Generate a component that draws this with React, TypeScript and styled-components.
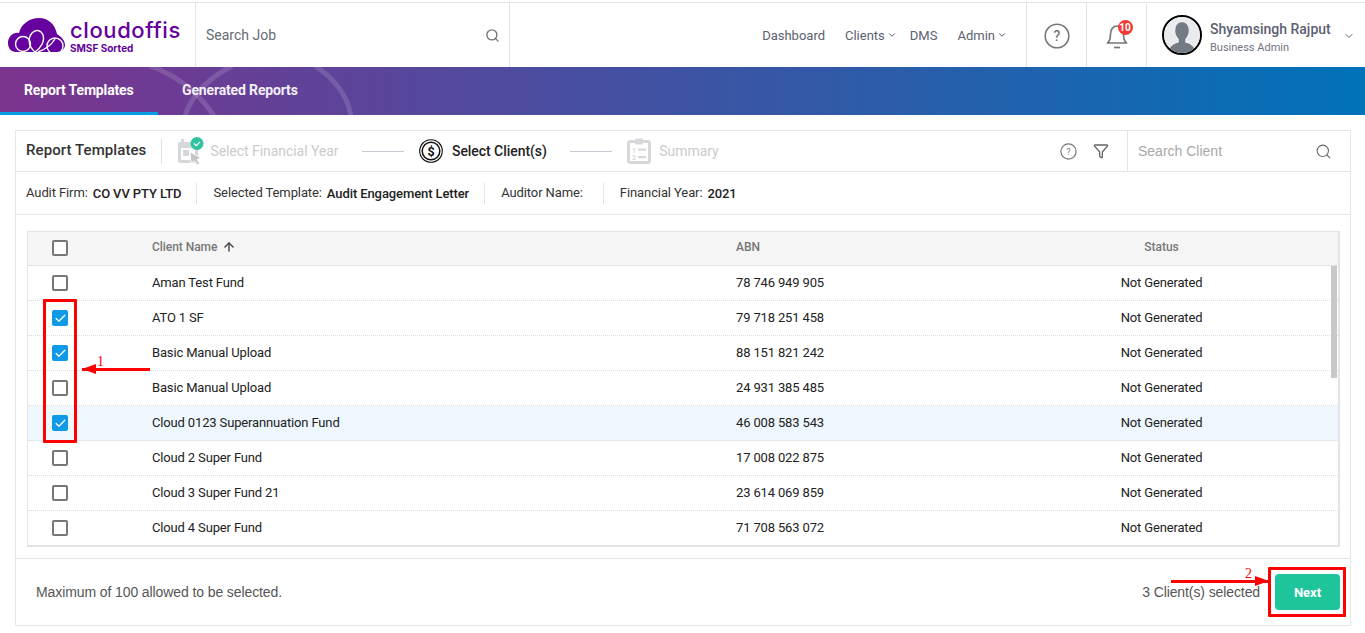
import React from 'react'
import styled, { createGlobalStyle } from 'styled-components'
import { ChevronDown, Search, ArrowUp, Check, Filter } from 'lucide-react'

const clients = [
  { name: 'Aman Test Fund', abn: '78 746 949 905', checked: false },
  { name: 'ATO 1 SF', abn: '79 718 251 458', checked: true },
  { name: 'Basic Manual Upload', abn: '88 151 821 242', checked: true },
  { name: 'Basic Manual Upload', abn: '24 931 385 485', checked: false },
  { name: 'Cloud 0123 Superannuation Fund', abn: '46 008 583 543', checked: true, hover: true },
  { name: 'Cloud 2 Super Fund', abn: '17 008 022 875', checked: false },
  { name: 'Cloud 3 Super Fund 21', abn: '23 614 069 859', checked: false },
  { name: 'Cloud 4 Super Fund', abn: '71 708 563 072', checked: false },
]

const GlobalStyle = createGlobalStyle`
  html, body {
    margin: 0;
    padding: 0;
    background: #fff;
    font-family: Roboto, "Liberation Sans", sans-serif;
  }
  * { box-sizing: border-box; }
`

const App: React.FC = () => {
  return (
    <Page>
      <GlobalStyle />
      <Header>
        <LogoBox>
          <svg width="58" height="36" viewBox="0 0 58 36">
            <path d="M8 35 C3 35 0 31 0 26 C0 20 5 15 11 16 C13 7 22 1 31 1 C40 1 47 7 49 17 C54 20 57 24 57 28 C57 32 53 35 49 35 Z" fill="#66009e" />
            <g fill="none" stroke="#fff" strokeWidth="1.4">
              <circle cx="15" cy="27" r="7.5" />
              <path d="M27 35 C21 30 19 22 24 16 C28 12 33 13 35 18 C37 24 33 31 27 35" />
              <path d="M30 35 C36 33 42 30 47 22" />
              <circle cx="47" cy="29" r="8" />
            </g>
          </svg>
          <LogoText>
            <LogoName>cloudoffis</LogoName>
            <LogoSub>SMSF Sorted</LogoSub>
          </LogoText>
        </LogoBox>
        <JobSearch>
          <span>Search Job</span>
          <Search size={15} color="#777" strokeWidth={2.2} />
        </JobSearch>
        <Nav>
          <NavItem>Dashboard</NavItem>
          <NavItem $tight>Clients<ChevronDown size={10} strokeWidth={2.4} /></NavItem>
          <NavItem>DMS</NavItem>
          <NavItem>Admin<ChevronDown size={10} strokeWidth={2.4} /></NavItem>
        </Nav>
        <IconCell>
          <HelpIcon width="26" height="26" viewBox="0 0 26 26">
            <circle cx="13" cy="13" r="11.8" fill="none" stroke="#777" strokeWidth="1.6" />
            <text x="13" y="18" textAnchor="middle" fontSize="14" fontWeight="500" fontFamily="Roboto" fill="#777">?</text>
          </HelpIcon>
        </IconCell>
        <IconCell>
          <BellWrap>
            <svg width="24" height="26" viewBox="0 0 24 26">
              <path d="M2.5 20 C4.5 18.5 5.5 16 5.5 11 C5.5 6 8.5 3 12 3 C15.5 3 18.5 6 18.5 11 C18.5 16 19.5 18.5 21.5 20 Z" fill="none" stroke="#777" strokeWidth="1.7" strokeLinejoin="round" />
              <path d="M9 24.5 H15" stroke="#777" strokeWidth="1.7" />
            </svg>
            <Badge>10</Badge>
          </BellWrap>
        </IconCell>
        <UserCell>
          <Avatar>
            <svg width="36" height="36" viewBox="0 0 34 34">
              <circle cx="17" cy="17" r="17" fill="#e9ebee" />
              <path d="M4 34 C5 27 10 25 14 24 L14 21 C11 18 10 14 11 10 C12 6 15 5 17 5 C19 5 22 6 23 10 C24 14 23 18 20 21 L20 24 C24 25 29 27 30 34 Z" fill="#737a82" />
            </svg>
          </Avatar>
          <UserText>
            <UserName>Shyamsingh Rajput</UserName>
            <UserRole>Business Admin</UserRole>
          </UserText>
          <ChevronDown size={12} color="#666" />
        </UserCell>
      </Header>

      <Banner>
        <BannerArt width="400" height="48" viewBox="0 67 400 48">
          <g fill="none" stroke="#fff" strokeOpacity="0.14" strokeWidth="5">
            <path d="M150 66 Q190 80 214 116" />
            <path d="M232 66 Q195 85 185 116" />
            <path d="M315 66 Q345 85 351 116" />
          </g>
        </BannerArt>
        <Tab $active>Report Templates</Tab>
        <Tab>Generated Reports</Tab>
      </Banner>

      <Card>
        <StepBar>
          <CardTitle>Report Templates</CardTitle>
          <StepDivider />
          <Step $muted $gap={5}>
            <svg width="28" height="28" viewBox="0 0 28 28">
              <rect x="1" y="5" width="20" height="21" rx="2" fill="#d5d7da" />
              <rect x="4" y="2" width="3" height="5" fill="#d5d7da" />
              <rect x="15" y="2" width="3" height="5" fill="#d5d7da" />
              <rect x="4" y="11" width="14" height="12" fill="#fff" />
              <rect x="6" y="13" width="6" height="6" fill="#d5d7da" />
              <path d="M13 15 L24 21 L20 22.5 L23 27 L20 28 L17.5 24 L14 26 Z" fill="#c4c6ca" stroke="#fff" strokeWidth="0.8" />
              <circle cx="20" cy="6.5" r="6.5" fill="#2ec4a0" />
              <path d="M17 6.5 L19.3 8.7 L23 4.8" fill="none" stroke="#fff" strokeWidth="1.2" />
            </svg>
            <span>Select Financial Year</span>
          </Step>
          <StepLine />
          <Step $gap={9}>
            <svg width="24" height="24" viewBox="0 0 24 24">
              <circle cx="12" cy="12" r="11.3" fill="none" stroke="#111" strokeWidth="1.1" />
              <circle cx="12" cy="12" r="8.8" fill="none" stroke="#111" strokeWidth="1.5" />
              <text x="12" y="16.5" textAnchor="middle" fontSize="12.5" fontWeight="700" fontFamily="Roboto" fill="#111">$</text>
            </svg>
            <span>Select Client(s)</span>
          </Step>
          <StepLine />
          <Step $muted $gap={8}>
            <svg width="24" height="26" viewBox="0 0 24 26">
              <rect x="1.5" y="3.5" width="21" height="21" rx="2" fill="#fff" stroke="#d5d7da" strokeWidth="3" />
              <rect x="8" y="0.5" width="8" height="6" rx="1" fill="#d5d7da" />
              <text x="7" y="14.5" textAnchor="middle" fontSize="7" fontWeight="700" fontFamily="Roboto" fill="#d5d7da">1</text>
              <text x="7" y="22" textAnchor="middle" fontSize="7" fontWeight="700" fontFamily="Roboto" fill="#d5d7da">2</text>
              <rect x="11" y="10.5" width="8" height="2.2" fill="#d5d7da" />
              <rect x="11" y="18" width="8" height="2.2" fill="#d5d7da" />
            </svg>
            <span>Summary</span>
          </Step>
          <BarTools>
            <svg width="17" height="17" viewBox="0 0 17 17">
              <circle cx="8.5" cy="8.5" r="7.6" fill="none" stroke="#777" strokeWidth="1.2" />
              <text x="8.5" y="11.5" textAnchor="middle" fontSize="8.5" fontFamily="Roboto" fill="#777">?</text>
            </svg>
            <Filter size={16} color="#666" strokeWidth={2} />
          </BarTools>
          <ClientSearch>
            <span>Search Client</span>
            <Search size={17} color="#666" strokeWidth={1.5} />
          </ClientSearch>
        </StepBar>

        <InfoBar>
          <InfoItem>
            <InfoLabel>Audit Firm:</InfoLabel>
            <InfoValue>CO VV PTY LTD</InfoValue>
          </InfoItem>
          <InfoItem>
            <InfoLabel>Selected Template:</InfoLabel>
            <InfoValue>Audit Engagement Letter</InfoValue>
          </InfoItem>
          <InfoItem>
            <InfoLabel>Auditor Name:</InfoLabel>
            <InfoValue />
          </InfoItem>
          <InfoItem>
            <InfoLabel>Financial Year:</InfoLabel>
            <InfoValue>2021</InfoValue>
          </InfoItem>
        </InfoBar>

        <TableArea>
          <Table>
            <HeadRow>
              <CheckCell><CheckBox /></CheckCell>
              <HeadName>Client Name <ArrowUp size={14} color="#444" strokeWidth={2.4} /></HeadName>
              <Cell>ABN</Cell>
              <StatusCell>Status</StatusCell>
            </HeadRow>
            <Body>
              {clients.map((c) => (
                <Row key={c.abn} $hover={c.hover}>
                  <CheckCell>
                    <CheckBox $checked={c.checked}>
                      {c.checked && <Check size={13} color="#fff" strokeWidth={2.4} />}
                    </CheckBox>
                  </CheckCell>
                  <Cell>{c.name}</Cell>
                  <Cell>{c.abn}</Cell>
                  <StatusCell>Not Generated</StatusCell>
                </Row>
              ))}
              <ScrollThumb />
            </Body>
          </Table>
        </TableArea>

        <Footer>
          <span>Maximum of 100 allowed to be selected.</span>
          <FooterRight>
            <span>3 Client(s) selected</span>
            <NextButton>Next</NextButton>
          </FooterRight>
        </Footer>
      </Card>

      <RedBox $left={43} $top={299} $width={34} $height={144} />
      <RedBox $left={1268} $top={567} $width={78} $height={50} />
      <Arrow $left={82} $top={362} $width={68} $dir="left" />
      <Arrow $left={1171} $top={574} $width={98} $dir="right" />
      <RedNumber $left={97} $top={354}>1</RedNumber>
      <RedNumber $left={1245} $top={566}>2</RedNumber>
    </Page>
  )
}

const Page = styled.div`
  position: relative;
  width: 1365px;
  height: 633px;
  padding-top: 2px;
  overflow: hidden;
  background: #fff;
`

const Header = styled.div`
  height: 65px;
  display: flex;
  border-top: 1px solid #e4e4e4;
  background: #fff;
`

const LogoBox = styled.div`
  width: 196px;
  display: flex;
  align-items: center;
  gap: 4px;
  padding: 0 0 1px 8px;
  border-right: 1px solid #e2e2e2;
`

const LogoText = styled.div`
  display: flex;
  flex-direction: column;
  padding-top: 3px;
`

const LogoName = styled.div`
  font-family: Inter, sans-serif;
  font-weight: 500;
  font-size: 22px;
  line-height: 24px;
  letter-spacing: 0.6px;
  color: #66009e;
`

const LogoSub = styled.div`
  font-family: Inter, sans-serif;
  font-weight: 700;
  font-size: 10px;
  line-height: 12px;
  color: #66009e;
`

const JobSearch = styled.div`
  width: 314px;
  display: flex;
  align-items: center;
  justify-content: space-between;
  padding: 0 9px 0 10px;
  border-right: 1px solid #e2e2e2;
  font-size: 14px;
  color: #666b75;
`

const Nav = styled.div`
  flex: 1;
  display: flex;
  align-items: center;
  justify-content: flex-end;
  gap: 20px;
  padding-right: 19px;
  font-size: 13px;
  color: #5c6070;
`

const NavItem = styled.div<{ $tight?: boolean }>`
  display: flex;
  align-items: center;
  gap: 2px;
  margin-right: ${(p) => (p.$tight ? '-7px' : '0')};
`

const IconCell = styled.div`
  width: 60px;
  display: flex;
  align-items: center;
  justify-content: center;
  border-left: 1px solid #e2e2e2;
`

const HelpIcon = styled.svg`
  position: relative;
  top: 1px;
`

const BellWrap = styled.div`
  position: relative;
  display: flex;
  top: 1px;
`

const Badge = styled.div`
  position: absolute;
  top: -3px;
  right: -4px;
  width: 15px;
  height: 15px;
  border-radius: 50%;
  background: #ee3b34;
  color: #fff;
  font-size: 10px;
  font-weight: 700;
  line-height: 15px;
  text-align: center;
`

const UserCell = styled.div`
  width: 219px;
  margin-top: 1px;
  display: flex;
  align-items: center;
  padding-left: 15px;
  border-left: 1px solid #e2e2e2;
  & > svg {
    margin-left: 12px;
  }
`

const Avatar = styled.div`
  width: 40px;
  height: 40px;
  border: 2px solid #000;
  border-radius: 50%;
  overflow: hidden;
  margin: 0 8px 2px 0;
`

const UserText = styled.div`
  display: flex;
  flex-direction: column;
  gap: 3px;
  padding-top: 4px;
`

const UserName = styled.div`
  font-size: 14px;
  font-weight: 500;
  line-height: 17px;
  color: #5c6070;
`

const UserRole = styled.div`
  font-size: 11px;
  line-height: 13px;
  color: #6f7480;
`

const Banner = styled.div`
  position: relative;
  height: 48px;
  display: flex;
  background: linear-gradient(90deg, #7c348f 0%, #0072b8 100%);
`

const BannerArt = styled.svg`
  position: absolute;
  left: 0;
  top: 0;
`

const Tab = styled.div<{ $active?: boolean }>`
  position: relative;
  width: ${(p) => (p.$active ? '158px' : 'auto')};
  padding: 0 24px;
  display: flex;
  align-items: center;
  font-size: 14px;
  font-weight: 700;
  letter-spacing: -0.15px;
  color: #fff;
  opacity: ${(p) => (p.$active ? 1 : 0.92)};
  border-bottom: 3px solid ${(p) => (p.$active ? '#00a0e3' : 'transparent')};
`

const Card = styled.div`
  margin: 15px 14px 0 15px;
  height: 496px;
  border: 1px solid #e6e6e6;
  display: flex;
  flex-direction: column;
`

const StepBar = styled.div`
  height: 41px;
  display: flex;
  align-items: center;
  padding-left: 10px;
  border-bottom: 1px solid #e4e4e4;
`

const CardTitle = styled.div`
  font-size: 15px;
  font-weight: 500;
  letter-spacing: 0.08px;
  color: #333;
  position: relative;
  top: -1px;
`

const StepDivider = styled.div`
  width: 1px;
  height: 25px;
  background: #e2e2e2;
  margin: 0 15px;
`

const Step = styled.div<{ $muted?: boolean; $gap: number }>`
  display: flex;
  align-items: center;
  gap: ${(p) => p.$gap}px;
  font-size: 14px;
  letter-spacing: -0.05px;
  font-weight: ${(p) => (p.$muted ? 400 : 500)};
  color: ${(p) => (p.$muted ? '#c9cbce' : '#222')};
`

const StepLine = styled.div`
  width: 42px;
  height: 1px;
  background: #c8cad4;
  margin: 0 15px 0 23.5px;
`

const BarTools = styled.div`
  margin-left: auto;
  display: flex;
  align-items: center;
  gap: 16px;
  padding-right: 18px;
`

const ClientSearch = styled.div`
  width: 223px;
  height: 100%;
  display: flex;
  align-items: center;
  justify-content: space-between;
  padding: 0 18px 0 10px;
  border-left: 1px solid #e4e4e4;
  font-family: "Liberation Sans", Arial, sans-serif;
  font-size: 14px;
  color: #a8a8a8;
`

const InfoBar = styled.div`
  height: 43px;
  display: flex;
  align-items: center;
  padding-left: 10px;
  border-bottom: 1px solid #e8e8e8;
`

const InfoItem = styled.div`
  display: flex;
  align-items: center;
  gap: 5px;
  height: 21px;
  padding-right: 15px;
  margin-right: 16px;
  border-right: 1px solid #e2e2e2;
  &:last-child {
    border-right: 0;
  }
`

const InfoLabel = styled.span`
  font-size: 13px;
  letter-spacing: -0.1px;
  color: #333;
  position: relative;
  top: -1px;
`

const InfoValue = styled.span`
  font-size: 13px;
  font-weight: 500;
  letter-spacing: -0.1px;
  color: #222;
`

const TableArea = styled.div`
  flex: 1;
  padding: 16px 10px 11px 11px;
  border-bottom: 1px solid #e4e4e4;
`

const Table = styled.div`
  height: 316px;
  border: 1px solid #e3e3e8;
  border-width: 1px 2px 2px 1px;
  overflow: hidden;
`

const columns = '124px 584px 249px 1fr'

const HeadRow = styled.div`
  height: 34px;
  padding-bottom: 1px;
  display: grid;
  grid-template-columns: ${columns};
  align-items: center;
  background: #f5f5f5;
  border-bottom: 1px solid #e2e2e2;
  font-size: 12px;
  font-weight: 500;
  letter-spacing: -0.05px;
  color: #777;
`

const Cell = styled.span`
  padding-bottom: 2px;
`

const HeadName = styled(Cell)`
  display: flex;
  align-items: center;
  gap: 5px;
`

const Body = styled.div`
  position: relative;
`

const Row = styled.div<{ $hover?: boolean }>`
  height: 35px;
  display: grid;
  grid-template-columns: ${columns};
  align-items: center;
  font-size: 13px;
  letter-spacing: -0.15px;
  color: #222;
  background: ${(p) => (p.$hover ? '#eef7fd' : '#fff')};
  border-bottom: 1px dotted #ddd;
`

const CheckCell = styled.div`
  padding-left: 24px;
  display: flex;
`

const StatusCell = styled(Cell)`
  text-align: center;
`

const CheckBox = styled.div<{ $checked?: boolean }>`
  width: 16px;
  height: 16px;
  border-radius: 2px;
  display: flex;
  align-items: center;
  justify-content: center;
  border: ${(p) => (p.$checked ? '0' : '2px solid #777')};
  background: ${(p) => (p.$checked ? '#0f9ae8' : '#fff')};
`

const ScrollThumb = styled.div`
  position: absolute;
  right: 1px;
  top: 0;
  width: 6px;
  height: 112px;
  background: #c8c8c8;
`

const Footer = styled.div`
  flex: 1;
  display: flex;
  align-items: center;
  justify-content: space-between;
  padding: 0 10px 0 20px;
  font-family: "Liberation Sans", Arial, sans-serif;
  font-size: 14px;
  letter-spacing: -0.1px;
  color: #555;
`

const FooterRight = styled.div`
  display: flex;
  align-items: center;
  gap: 15px;
`

const NextButton = styled.button`
  width: 65px;
  height: 36px;
  border: 0;
  border-radius: 4px;
  background: #1fc59a;
  color: #fff;
  font-family: Roboto, sans-serif;
  font-size: 13px;
  font-weight: 700;
`

type Place = { $left: number; $top: number }

const RedBox = styled.div<Place & { $width: number; $height: number }>`
  position: absolute;
  left: ${(p) => p.$left}px;
  top: ${(p) => p.$top}px;
  width: ${(p) => p.$width}px;
  height: ${(p) => p.$height}px;
  border: 3px solid #f00;
  border-radius: 1px;
`

const Arrow = styled.div<Place & { $width: number; $dir: 'left' | 'right' }>`
  position: absolute;
  left: ${(p) => p.$left}px;
  top: ${(p) => p.$top}px;
  width: ${(p) => p.$width}px;
  height: 14px;
  &::before {
    content: '';
    position: absolute;
    top: 6px;
    left: 0;
    right: 0;
    height: 2.5px;
    background: #f00;
  }
  &::after {
    content: '';
    position: absolute;
    top: 2px;
    ${(p) => (p.$dir === 'left' ? 'left: 0;' : 'right: 0;')}
    border-top: 5px solid transparent;
    border-bottom: 5px solid transparent;
    ${(p) => (p.$dir === 'left' ? 'border-right: 14px solid #f00;' : 'border-left: 14px solid #f00;')}
  }
`

const RedNumber = styled.div<Place>`
  position: absolute;
  left: ${(p) => p.$left}px;
  top: ${(p) => p.$top}px;
  font-family: "Liberation Serif", serif;
  font-size: 14px;
  color: #f00;
`

export default App
